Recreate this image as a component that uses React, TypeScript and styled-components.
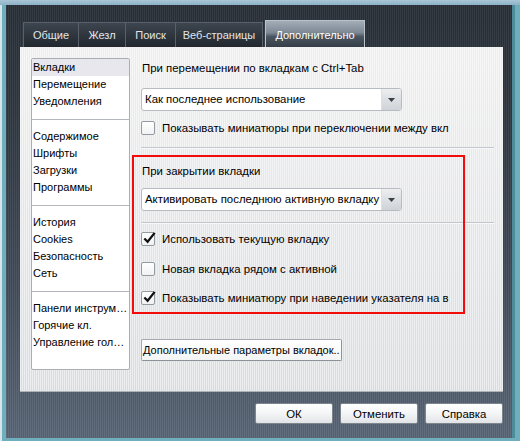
import styled, { createGlobalStyle } from "styled-components";

const GlobalStyle = createGlobalStyle`
  html, body {
    margin: 0;
    padding: 0;
    background: #dfe8ec;
  }
  body {
    font-family: "Liberation Sans", Arial, sans-serif;
    font-size: 11.4px;
    color: #000;
  }
`;

const stripes = `repeating-linear-gradient(90deg, rgba(255,255,255,0.05) 0 1px, rgba(0,0,0,0.06) 1px 2px)`;
const lightStripes = `repeating-linear-gradient(90deg, rgba(255,255,255,0.45) 0 1px, rgba(0,0,0,0.015) 1px 2px)`;

const Shell = styled.div`
  width: 520px;
  height: 441px;
  box-sizing: border-box;
  padding: 5px 5px 3px 6px;
  background: linear-gradient(90deg, #d7e5ea 0 2px, #6eaebd 2px 100%);
  position: relative;
  &::before {
    content: "";
    position: absolute;
    left: 0;
    right: 0;
    top: 0;
    height: 5px;
    background: linear-gradient(#a9c6d6, #8db2c6);
  }
`;

const Frame = styled.div`
  height: 100%;
  box-sizing: border-box;
  padding: 15px 0 0 14px;
  background: ${stripes},
    linear-gradient(#2a3038 0%, #303841 25%, #434d5a 65%, #5a6677 100%);
  border-right: 3px solid #4d8c9b;
`;

const TabRow = styled.div`
  display: flex;
  align-items: flex-end;
  height: 27px;
  margin-left: 3px;
`;

const Tab = styled.div<{ $w: number; $active?: boolean }>`
  width: ${(p) => p.$w}px;
  height: ${(p) => (p.$active ? 27 : 25)}px;
  box-sizing: border-box;
  margin-left: ${(p) => (p.$active ? 3 : 0)}px;
  margin-right: -1px;
  display: flex;
  align-items: center;
  justify-content: center;
  padding-top: ${(p) => (p.$active ? 2 : 0)}px;
  font-size: 11px;
  color: ${(p) => (p.$active ? "#ffffff" : "#e2e6ea")};
  white-space: nowrap;
  border: 1px solid ${(p) => (p.$active ? "#b9c2ca" : "#58616b")};
  border-bottom: 0;
  background: ${(p) =>
    p.$active
      ? "linear-gradient(#a3adb8 0%, #7c8894 45%, #4a5560 60%, #353e48 100%)"
      : "linear-gradient(#3d454e 0%, #2f363e 50%, #22282e 100%)"};
`;

const Panel = styled.div`
  width: 483px;
  height: 345px;
  box-sizing: border-box;
  display: flex;
  gap: 11px;
  padding: 11px 9px 0 11px;
  background: ${lightStripes}, linear-gradient(#f1f1f2 0%, #e9eaec 40%, #dcdfe2 100%);
  border-bottom: 1px solid #aeb3b8;
`;

const NavList = styled.div`
  width: 99px;
  height: 312px;
  flex: none;
  box-sizing: border-box;
  background: #fff;
  border: 1px solid #a9aeb4;
  border-radius: 2px;
  overflow: hidden;
  font-size: 11px;
`;

const NavItem = styled.div<{ $selected?: boolean }>`
  height: 17px;
  line-height: 17px;
  padding: 0 1px;
  white-space: nowrap;
  overflow: hidden;
  background: ${(p) => (p.$selected ? "#e8e7ed" : "transparent")};
`;

const NavDivider = styled.div`
  height: 1px;
  background: #b3b7bc;
  margin: 9px 0 8px;
`;

const Settings = styled.div`
  flex: 1;
  position: relative;
  padding-top: 2px;
  display: flex;
  flex-direction: column;
`;

const Label = styled.div<{ $top?: number }>`
  height: 17px;
  line-height: 17px;
  margin-top: ${(p) => p.$top ?? 0}px;
  padding-left: 1px;
  white-space: nowrap;
`;

const Select = styled.div<{ $top: number }>`
  width: 261px;
  height: 23px;
  margin-top: ${(p) => p.$top}px;
  box-sizing: border-box;
  display: flex;
  align-items: stretch;
  background: #fff;
  border: 1px solid #b7bcc2;
  border-radius: 3px;
  overflow: hidden;
`;

const SelectValue = styled.div`
  flex: 1;
  padding-left: 3px;
  line-height: 21px;
  white-space: nowrap;
  overflow: hidden;
`;

const SelectArrow = styled.div`
  width: 19px;
  display: flex;
  align-items: center;
  justify-content: center;
  background: linear-gradient(#eceef0, #cfd3d7);
  border-left: 1px solid #dde0e3;
`;

const Divider = styled.div<{ $top: number }>`
  height: 1px;
  margin-top: ${(p) => p.$top}px;
  background: #c3c7cb;
  box-shadow: 0 1px 0 #f7f8f9;
`;

const CheckRow = styled.label<{ $top: number }>`
  display: flex;
  align-items: center;
  gap: 7px;
  height: 14px;
  width: 308px;
  margin-top: ${(p) => p.$top}px;
  white-space: nowrap;
  overflow: hidden;
`;

const Box = styled.span`
  width: 14px;
  height: 14px;
  flex: none;
  box-sizing: border-box;
  display: flex;
  align-items: center;
  justify-content: center;
  background: linear-gradient(#ffffff, #f1f2f3);
  border: 1px solid #939aa1;
  border-radius: 2px;
  overflow: visible;
`;

const MoreButton = styled.div`
  width: 201px;
  height: 22px;
  margin-top: 34px;
  box-sizing: border-box;
  padding-left: 1px;
  line-height: 20px;
  font-size: 11px;
  white-space: nowrap;
  overflow: hidden;
  background: linear-gradient(#ffffff, #f3f4f5);
  border: 1px solid #a3a9af;
  border-right-color: #8c9298;
  border-bottom-color: #8c9298;
  border-radius: 2px;
`;

const Highlight = styled.div`
  position: absolute;
  left: -9px;
  top: 97px;
  width: 333px;
  height: 159px;
  box-sizing: border-box;
  border: 2px solid #f20c0c;
  pointer-events: none;
`;

const Footer = styled.div`
  width: 483px;
  display: flex;
  justify-content: flex-end;
  gap: 7px;
  margin-top: 11px;
`;

const DialogButton = styled.div`
  width: 78px;
  height: 21px;
  box-sizing: border-box;
  display: flex;
  align-items: center;
  justify-content: center;
  background: linear-gradient(#ffffff 0%, #f4f5f6 50%, #e1e4e7 100%);
  border: 1px solid #7d858d;
  border-radius: 2px;
`;

const Arrow = () => (
  <svg width="7" height="4" viewBox="0 0 7 4">
    <path d="M0 0 H7 L3.5 4 Z" fill="#3c4045" />
  </svg>
);

const Tick = () => (
  <svg width="16" height="16" viewBox="0 0 16 16" style={{ marginTop: -3, marginRight: -3 }}>
    <path d="M2.5 8.5 L6 12 L13.5 2.5" fill="none" stroke="#111" strokeWidth="2.4" />
  </svg>
);

const Check = ({ on, text, top }: { on?: boolean; text: string; top: number }) => (
  <CheckRow $top={top}>
    <Box>{on && <Tick />}</Box>
    {text}
  </CheckRow>
);

const navGroups = [
  ["Вкладки", "Перемещение", "Уведомления"],
  ["Содержимое", "Шрифты", "Загрузки", "Программы"],
  ["История", "Cookies", "Безопасность", "Сеть"],
  ["Панели инструм…", "Горячие кл.", "Управление гол…"],
];

const tabs = [
  { title: "Общие", w: 56 },
  { title: "Жезл", w: 48 },
  { title: "Поиск", w: 51 },
  { title: "Веб-страницы", w: 88 },
];

export default function App() {
  return (
    <>
      <GlobalStyle />
      <Shell>
        <Frame>
          <TabRow>
            {tabs.map((t) => (
              <Tab key={t.title} $w={t.w}>
                {t.title}
              </Tab>
            ))}
            <Tab $w={100} $active>
              Дополнительно
            </Tab>
          </TabRow>
          <Panel>
            <NavList>
              {navGroups.map((group, i) => (
                <div key={i}>
                  {i > 0 && <NavDivider />}
                  {group.map((item) => (
                    <NavItem key={item} $selected={item === "Вкладки"}>
                      {item}
                    </NavItem>
                  ))}
                </div>
              ))}
            </NavList>
            <Settings>
              <Label>При перемещении по вкладкам с Ctrl+Tab</Label>
              <Select $top={11}>
                <SelectValue>Как последнее использование</SelectValue>
                <SelectArrow>
                  <Arrow />
                </SelectArrow>
              </Select>
              <Check top={10} text="Показывать миниатюры при переключении между вкл" />
              <Divider $top={12} />
              <Label $top={15}>При закрытии вкладки</Label>
              <Select $top={8}>
                <SelectValue>Активировать последнюю активную вкладку</SelectValue>
                <SelectArrow>
                  <Arrow />
                </SelectArrow>
              </Select>
              <Divider $top={11} />
              <Check on top={9} text="Использовать текущую вкладку" />
              <Check top={16} text="Новая вкладка рядом с активной" />
              <Check on top={15} text="Показывать миниатюру при наведении указателя на в" />
              <MoreButton>Дополнительные параметры вкладок..</MoreButton>
              <Highlight />
            </Settings>
          </Panel>
          <Footer>
            <DialogButton>ОК</DialogButton>
            <DialogButton>Отменить</DialogButton>
            <DialogButton>Справка</DialogButton>
          </Footer>
        </Frame>
      </Shell>
    </>
  );
}
